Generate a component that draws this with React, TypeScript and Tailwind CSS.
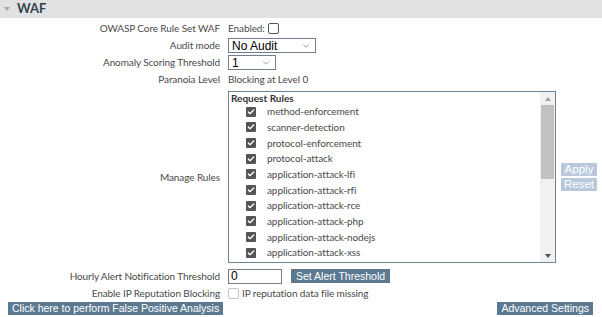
import { Check, ChevronDown } from 'lucide-react'

const rules = [
  'method-enforcement',
  'scanner-detection',
  'protocol-enforcement',
  'protocol-attack',
  'application-attack-lfi',
  'application-attack-rfi',
  'application-attack-rce',
  'application-attack-php',
  'application-attack-nodejs',
  'application-attack-xss',
]

const labelFont = "font-['Lato','Noto_Sans',sans-serif]"
const btnFont = "font-['Liberation_Sans',Arial,sans-serif]"
const txt = 'text-[10px] tracking-[-0.1px] text-[#4a4a4a]'

function Row({ label, children, h = 'h-[17px]' }: { label: string; children: React.ReactNode; h?: string }) {
  return (
    <div className={`flex ${h} items-center`}>
      <div className={`w-[220px] text-right ${txt}`}>{label}</div>
      <div className="ml-2 flex items-center">{children}</div>
    </div>
  )
}

function Select({ value, w }: { value: string; w: string }) {
  return (
    <div className={`flex h-[15px] ${w} items-center justify-between border border-[#6f7f8f] bg-white pl-[3px] pr-[4px] ${btnFont} text-[12px] leading-none text-black`}>
      <span>{value}</span>
      <ChevronDown size={10} strokeWidth={1.5} className="text-[#666]" />
    </div>
  )
}

function Button({ children, className = '' }: { children: React.ReactNode; className?: string }) {
  return (
    <div className={`flex items-center bg-[#5b7991] ${btnFont} text-[10.5px] leading-none text-white ${className}`}>{children}</div>
  )
}

function Box() {
  return (
    <span className="ml-[15px] flex h-[10px] w-[10px] shrink-0 items-center justify-center rounded-[1px] bg-[#555]">
      <Check size={8} strokeWidth={4} className="text-white" />
    </span>
  )
}

export default function App() {
  return (
    <div className={`h-[317px] w-[602px] overflow-hidden bg-white ${labelFont}`}>
      <div className="flex h-[18px] items-center bg-[#dfe1e2] pl-[4px]">
        <span className="mr-[7px] h-0 w-0 border-x-[3.5px] border-t-[4px] border-x-transparent border-t-[#a5a8ab]" />
        <span className="text-[13px] font-bold text-[#33414f]">WAF</span>
      </div>
      <div className="pt-[2px]">
        <Row label="OWASP Core Rule Set WAF">
          <span className={txt}>Enabled:</span>
          <span className="ml-[3px] h-[11px] w-[11px] rounded-[2px] border border-[#555] bg-white" />
        </Row>
        <Row label="Audit mode">
          <Select value="No Audit" w="w-[88px]" />
        </Row>
        <Row label="Anomaly Scoring Threshold">
          <Select value="1" w="w-[48px]" />
        </Row>
        <Row label="Paranoia Level">
          <span className={txt}>Blocking at Level 0</span>
        </Row>
        <div className="mt-[3px] flex h-[172px] items-center">
          <div className={`w-[220px] text-right ${txt}`}>Manage Rules</div>
          <div className="ml-2 flex h-full w-[328px] border border-[#6f8396] bg-white">
            <div className="flex-1 overflow-hidden pl-[2px]">
              <div className="h-[12px] text-[10px] font-bold leading-[12px] text-[#333]">Request Rules</div>
              {rules.map((r) => (
                <div key={r} className="flex h-[15.67px] items-center">
                  <Box />
                  <span className={`ml-[11px] ${txt}`}>{r}</span>
                </div>
              ))}
              <div className="flex h-[15.67px] items-center">
                <Box />
              </div>
            </div>
            <div className="flex w-[15px] flex-col bg-[#f1f1f1]">
              <div className="flex h-[13px] items-center justify-center">
                <span className="h-0 w-0 border-x-[3.5px] border-b-[4px] border-x-transparent border-b-[#a3a3a3]" />
              </div>
              <div className="mx-[1px] h-[74px] bg-[#c1c1c1]" />
              <div className="flex-1" />
              <div className="flex h-[13px] items-center justify-center">
                <span className="h-0 w-0 border-x-[3.5px] border-t-[4px] border-x-transparent border-t-[#505050]" />
              </div>
            </div>
          </div>
          <div className={`ml-[5px] flex flex-col gap-[2px] ${btnFont}`}>
            <div className="flex h-[13px] w-[36px] items-center justify-center bg-[#b7c9da] text-[11.5px] leading-none text-white">Apply</div>
            <div className="flex h-[13px] w-[36px] items-center justify-center bg-[#b7c9da] text-[11.5px] leading-none text-white">Reset</div>
          </div>
        </div>
        <div className="mt-[4px]">
          <Row label="Hourly Alert Notification Threshold" h="h-[18px]">
            <div className={`flex h-[15px] w-[54px] items-center border border-[#6f7f8f] bg-white pl-[2px] ${btnFont} text-[12px] leading-none text-black`}>0</div>
            <Button className="ml-[9px] h-[14px] px-[5px]">Set Alert Threshold</Button>
          </Row>
        </div>
        <Row label="Enable IP Reputation Blocking">
          <span className="h-[11px] w-[11px] rounded-[2px] border border-[#c4c4c4] bg-white" />
          <span className={`ml-[3px] ${txt}`}>IP reputation data file missing</span>
        </Row>
        <div className="flex items-center justify-between pl-[8px] pr-[9px]">
          <Button className="h-[13px] px-[4px]">Click here to perform False Positive Analysis</Button>
          <Button className="h-[13px] px-[4px]">Advanced Settings</Button>
        </div>
      </div>
    </div>
  )
}
